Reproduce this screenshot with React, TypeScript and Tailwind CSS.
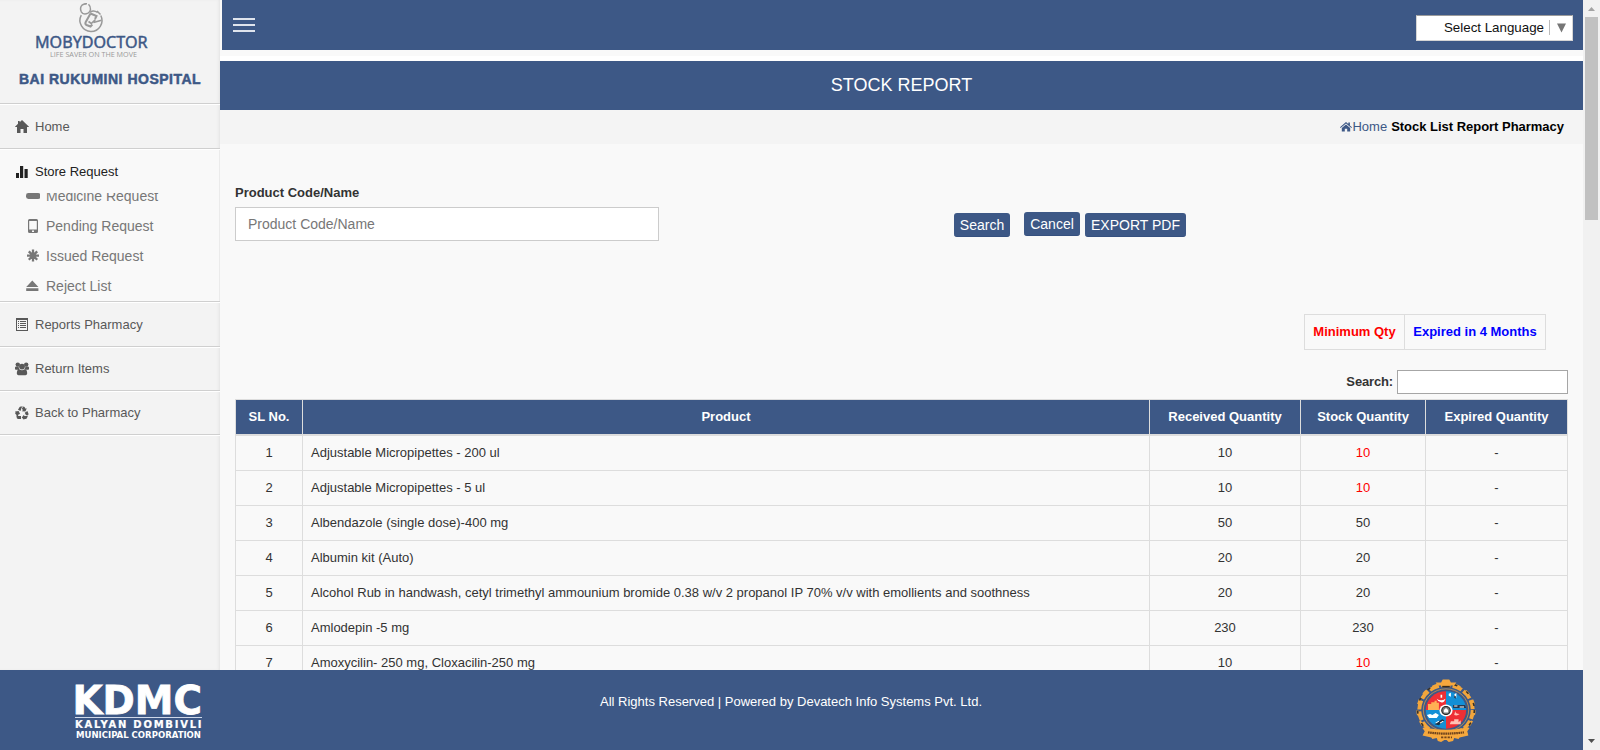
import React from "react";

const rows: [string, string, string, boolean][] = [
  ["Adjustable Micropipettes - 200 ul", "10", "10", true],
  ["Adjustable Micropipettes - 5 ul", "10", "10", true],
  ["Albendazole (single dose)-400 mg", "50", "50", false],
  ["Albumin kit (Auto)", "20", "20", false],
  [
    "Alcohol Rub in handwash, cetyl trimethyl ammounium bromide 0.38 w/v 2 propanol IP 70% v/v with emollients and soothness",
    "20",
    "20",
    false,
  ],
  ["Amlodepin -5 mg", "230", "230", false],
  ["Amoxycilin- 250 mg, Cloxacilin-250 mg", "10", "10", true],
];

function Icon({ children }: { children: React.ReactNode }) {
  return (
    <svg width="14" height="14" viewBox="0 0 14 14" fill="currentColor" className="shrink-0">
      {children}
    </svg>
  );
}

const HomeIcon = () => (
  <Icon>
    <path d="M7 0 14.200 7H12V13H8.500V9H5.500V13H2V7H-.2L3 3.800V1H4.700V2.300Z" />
  </Icon>
);
const StatsIcon = () => (
  <Icon>
    <path d="M1 8h3v5H1zM5 1h3.200v12H5zM9.500 4h3.200v9H9.500z" />
  </Icon>
);
const PillIcon = () => (
  <Icon>
    <rect x="0" y="4" width="14.500" height="6" rx="2.400" />
  </Icon>
);
const PhoneIcon = () => (
  <Icon>
    <path
      fillRule="evenodd"
      d="M3.500 0h7Q12 0 12 1.500v11Q12 14 10.500 14h-7Q2 14 2 12.500v-11Q2 0 3.500 0ZM3.200 1.900v8.600h7.600V1.900ZM6 11.600v1.300h2v-1.300Z"
    />
  </Icon>
);
const AsteriskIcon = () => (
  <Icon>
    <path d="M7 .6v12M1 6.600h12M2.800 2.400l8.400 8.400M11.200 2.400l-8.400 8.400" stroke="currentColor" strokeWidth="2.300" />
  </Icon>
);
const EjectIcon = () => (
  <Icon>
    <path d="M6.300 1.500 12.400 8H.2ZM.2 9.200h12.200v2.800H.2z" />
  </Icon>
);
const ListIcon = () => (
  <Icon>
    <path
      fillRule="evenodd"
      d="M1 0h12v13H1ZM2 2v10h10V2ZM3 3h1v1H3ZM5 3h6v1H5ZM3 5h1v1H3ZM5 5h6v1H5ZM3 7h1v1H3ZM5 7h6v1H5ZM3 9h1v1H3ZM5 9h6v1H5Z"
    />
  </Icon>
);
const UsersIcon = () => (
  <Icon>
    <circle cx="2.800" cy="2.600" r="2.200" />
    <circle cx="11.200" cy="2.600" r="2.200" />
    <circle cx="7" cy="4.600" r="2.900" />
    <path d="M0 7.300V5.500Q.2 4.300 1.500 4.500h2.200Q3.500 6 4.600 7.200L3.300 7.800H.8ZM14 7.300V5.500Q13.800 4.300 12.500 4.500h-2.200Q10.500 6 9.400 7.200L10.700 7.800h2.500ZM1.800 11.600Q1.800 7.300 4.500 7.300 7 9.200 9.500 7.300 12.200 7.300 12.200 11.600 12 13.200 10.500 13.200h-7Q2 13.200 1.800 11.600Z" />
  </Icon>
);
const RecycleIcon = () => (
  <Icon>
    <path d="M3 3.700 4.600 1Q5 .4 5.800 .4H8L6.600 1.700 5.500 5ZM8.400 .5Q9.300 .6 9.700 1.300L10.600 2.700 11.800 2.200 10.400 5.600 6.700 5.200 7.900 4.300 6.900 2.500ZM-.1 5.500 3.600 5 5.200 8.200 3.900 8 2.700 10.200.3 7.700Q0 7.100.6 6.200ZM1.200 9.200 2.800 10H6V13H3.300Q2.300 13 1.900 12.200ZM12.400 5 13.400 7.400Q13.700 8.200 13.200 9L11 9.300 9.700 6.800ZM6.700 11.600 9.200 8.600V10h2.400L13 9.500 11.900 12.200Q11.500 13 10.600 13H9.200v1Z" />
  </Icon>
);

function NavItem({ icon, label, tall }: { icon: React.ReactNode; label: string; tall?: boolean }) {
  return (
    <div
      className={`flex ${tall ? "h-[45px] pt-px" : "h-[44px] pb-px"} shrink-0 items-center border-t border-b border-t-white border-b-[#cfcfcf] pl-[15px] text-[13px] text-[#585858]`}
    >
      <span className="flex w-[20px]">{icon}</span>
      <span>{label}</span>
    </div>
  );
}

function SubItem({ icon, label }: { icon: React.ReactNode; label: string }) {
  return (
    <div className="flex h-[30px] shrink-0 items-center gap-[6px] pl-[26px] text-[14px] text-[#777]">
      {icon}
      <span>{label}</span>
    </div>
  );
}

function MobyLogo() {
  return (
    <svg width="116" height="60" viewBox="34 0 116 60" className="block">
      <g fill="none" stroke="#999" strokeWidth="1.500">
        <path d="M81.300 15.200A11 11 0 1 0 100.800 15.500" />
        <path d="M88 13.200Q83.500 15.500 81.300 11.800 79.500 7.500 82 5.200 83.500 4 86 3.800M88.500 4.300Q90.800 6.500 90.500 9.500 90.200 12 88 13.200" />
        <path d="M84.500 3.800h2.500M90 12.300Q93.500 9.800 97.500 12.500M97 11l3.500 3.500" />
        <path d="M90.500 13.500 96.500 16 95 19M90.500 13.500 85.500 22.500Q85 24.300 86.500 25L90.500 26.500 92.300 24.500" strokeWidth="2" />
        <path d="m88.500 21.500 2.800 2L95.500 19.500M93.500 22.500 101.500 20.300" strokeWidth="1.700" />
      </g>
      <text
        x="35"
        y="47.500"
        fill="#3d5886"
        stroke="#3d5886"
        strokeWidth=".45"
        fontFamily="Noto Sans, sans-serif"
        fontSize="16"
        textLength="112.500"
        lengthAdjust="spacingAndGlyphs"
      >
        MOBYDOCTOR
      </text>
      <text x="50" y="57" fill="#999" fontFamily="Open Sans, sans-serif" fontSize="7.800" textLength="87" lengthAdjust="spacingAndGlyphs">
        LIFE SAVER ON THE MOVE
      </text>
    </svg>
  );
}

function KdmcLogo() {
  return (
    <svg
      width="132"
      height="80"
      viewBox="72 670 132 80"
      className="block"
      fill="#fff"
      fontFamily="DejaVu Sans, sans-serif"
      fontWeight="bold"
    >
      <text x="72.500" y="713.500" fontSize="39.500" stroke="#fff" strokeWidth=".8" textLength="129.500" lengthAdjust="spacingAndGlyphs">
        KDMC
      </text>
      <path d="M75 717h127v1H75z" fill="#cfd9ea" />
      <text x="75" y="728" fontSize="10" stroke="#fff" strokeWidth=".2" textLength="126.500" lengthAdjust="spacing">
        KALYAN DOMBIVLI
      </text>
      <text x="76" y="737.700" fontSize="8.500" textLength="125" lengthAdjust="spacingAndGlyphs">
        MUNICIPAL CORPORATION
      </text>
    </svg>
  );
}

function Emblem() {
  return (
    <svg width="60" height="64" viewBox="2 0.5 55 63" preserveAspectRatio="none" className="block">
      <circle cx="29.500" cy="31" r="24.500" fill="none" stroke="#f2a63c" strokeWidth="3.600" strokeDasharray="9 2" />
      <circle cx="29.500" cy="31" r="26.200" fill="none" stroke="#f2a63c" strokeWidth="1.800" strokeDasharray="5 6" />
      <circle cx="29.500" cy="31" r="26" fill="none" stroke="#3a3226" strokeWidth="1.500" strokeDasharray="3 10" />
      <circle cx="29.500" cy="31" r="20.800" fill="#3d5886" stroke="#c9974e" strokeWidth=".8" />
      <path d="M29.500 31V12.500A18.500 18.500 0 0 0 11 31Z" fill="#ee2f35" />
      <path d="M29.500 31V12.500A18.500 18.500 0 0 1 48 31Z" fill="#138fd6" />
      <path d="M29.500 31H11A18.500 18.500 0 0 0 29.500 49.500Z" fill="#138fd6" />
      <path d="M29.500 31H48A18.500 18.500 0 0 1 29.500 49.500Z" fill="#ee2f35" />
      <path d="M13 25h3v-1.500h3V22h2v2h2v7H13z" fill="#ffb054" />
      <path d="M21 20q4 3 8 0-1 4-4 3.500T21 20ZM24.500 16h1.500v3h-1.500Z" fill="#fff" />
      <path d="M32 15l2-1v4l-2-1ZM37 16l2-2v5l-2-1Z" fill="#fff" />
      <path d="M37 16.500l1.500 1V20L37 19ZM36 26h11l1 3H36Z" fill="#26394f" />
      <path d="M37 27h3M42 28h4" stroke="#fff" />
      <path d="M12 36l3-1 2 1 3-2 3 2-2 3h-7Z" fill="#fff" />
      <path d="m19 45 7-5 2 1-5 5Z" fill="#1c2f42" />
      <path d="m20 44 3-2M24 44l3-2" stroke="#fff" />
      <path d="M38 32q0 3 4 3-2 2-5 1ZM34 42h3v-2h4v3l2-2v4H33Z" fill="#ffc2b5" />
      <circle cx="29.500" cy="31.500" r="6" fill="#fff" />
      <circle cx="29.500" cy="31.500" r="3.900" fill="#777" stroke="#222" strokeWidth="1" />
      <path d="M27.500 33.500v-2.500l2-2 2 2v2.500Z" fill="#fff" />
      <path d="M20 4h5l1.500-3h6L34 4h5l-2 3H22Z" fill="#f6a83d" />
      <path d="M26 8h7" stroke="#3a2a18" strokeWidth="1.500" />
      <path
        d="M8 49q2-2 6 0 15 3 31 0 4-2 6 0l-2 3 1 4-4 1-4 1-1 1.500-4-1-1 3-4 1-2-2h-2l-3 2-3-1-1-3-4 1-1-1.500-4-1-4-1 2-4Z"
        fill="#f6a83d"
      />
      <path d="M13 53q16 2.500 33 0" fill="none" stroke="#6f431c" strokeWidth="2.200" strokeDasharray="1.500 .5" />
      <path d="M25 58h10" stroke="#6f431c" strokeWidth="1.800" strokeDasharray="2 1" />
    </svg>
  );
}

function Sidebar() {
  return (
    <aside className="flex w-[220px] shrink-0 flex-col bg-[#f3f3f3] shadow-[inset_-2px_0_3px_-1px_#e2e2e2]">
      <div className="flex h-[104px] shrink-0 flex-col border-b border-[#cfcfcf]">
        <div className="pl-[34px]">
          <MobyLogo />
        </div>
        <div className="mt-[9px] pl-[19px] text-[14px] leading-[20px] font-bold tracking-[0.5px] text-[#3d5886] [-webkit-text-stroke:0.5px_#3d5886]">
          BAI RUKUMINI HOSPITAL
        </div>
      </div>
      <NavItem icon={<HomeIcon />} label="Home" tall />
      <div className="flex h-[153px] shrink-0 flex-col border-t border-b border-t-white border-b-[#cfcfcf] bg-[#f9f9f9]">
        <div className="flex h-[43px] shrink-0 items-center gap-[6px] border-r border-[#ebebeb] pt-px pl-[15px] text-[13px] text-[#222]">
          <StatsIcon />
          <span>Store Request</span>
        </div>
        <div className="flex min-h-0 grow flex-col justify-end overflow-hidden border-r border-[#ebebeb]">
          <SubItem icon={<PillIcon />} label="Medicine Request" />
          <SubItem icon={<PhoneIcon />} label="Pending Request" />
          <SubItem icon={<AsteriskIcon />} label="Issued Request" />
          <SubItem icon={<EjectIcon />} label="Reject List" />
        </div>
      </div>
      <NavItem icon={<ListIcon />} label="Reports Pharmacy" tall />
      <NavItem icon={<UsersIcon />} label="Return Items" />
      <NavItem icon={<RecycleIcon />} label="Back to Pharmacy" />
      <div className="h-px shrink-0 bg-white" />
    </aside>
  );
}

function StockTable() {
  const th = "border border-b-2 border-[#ddd] p-0 pb-px text-center font-bold";
  const td = "border border-[#ddd] p-0 text-center";
  return (
    <table className="w-[1333px] table-fixed border-collapse text-[13px] text-[#333]">
      <colgroup>
        <col className="w-[67px]" />
        <col className="w-[847px]" />
        <col className="w-[151px]" />
        <col className="w-[125px]" />
        <col className="w-[142px]" />
      </colgroup>
      <thead>
        <tr className="h-[35px] bg-[#3d5886] text-white">
          <th className={th}>SL No.</th>
          <th className={th}>Product</th>
          <th className={th}>Received Quantity</th>
          <th className={th}>Stock Quantity</th>
          <th className={th}>Expired Quantity</th>
        </tr>
      </thead>
      <tbody>
        {rows.map(([name, received, stock, low], i) => (
          <tr key={name} className={i === 0 ? "h-[36px]" : "h-[35px]"}>
            <td className={td}>{i + 1}</td>
            <td className="border border-[#ddd] p-0 pl-[8px] text-left">{name}</td>
            <td className={td}>{received}</td>
            <td className={low ? "border border-[#ddd] p-0 text-center text-[#f00]" : td}>{stock}</td>
            <td className={td}>-</td>
          </tr>
        ))}
      </tbody>
    </table>
  );
}

function Main() {
  const btn =
    "flex h-[24px] items-center justify-center rounded-[3px] border-b border-[#35507f] bg-[#3d5886] pt-[2px] text-[14px] text-white";
  return (
    <main className="flex min-w-0 grow flex-col overflow-hidden bg-[#f9f9f9]">
      <header className="ml-[2px] flex h-[50px] shrink-0 items-start justify-between bg-[#3d5886] pt-[15px] pr-[10px] pl-[11px]">
        <div className="mt-[3px] flex w-[22px] flex-col gap-[4px]">
          <div className="h-[2px] bg-[#dfe4ed]" />
          <div className="h-[2px] bg-[#dfe4ed]" />
          <div className="h-[2px] bg-[#dfe4ed]" />
        </div>
        <div className="flex h-[26px] w-[157px] items-center justify-end border border-t-[#9b9b9b] border-r-[#d5d5d5] border-b-[#d5d5d5] border-l-[#d5d5d5] bg-white pr-[6px] text-[13.333px] text-[#111]">
          <span className="mt-[-1px] whitespace-nowrap">Select Language</span>
          <span className="mt-[-1px] mr-[7px] ml-[5px] h-[15px] w-px bg-[#bbb]" />
          <svg width="9" height="10" viewBox="0 0 9 10">
            <path d="M0 .5h9L4.500 9.500Z" fill="#767676" />
          </svg>
        </div>
      </header>
      <div className="mt-[6px] h-[5px] shrink-0 bg-white" />
      <h1 className="flex h-[49px] shrink-0 items-center justify-center bg-[#3d5886] text-[18px] text-white">STOCK REPORT</h1>
      <div className="flex h-[34px] shrink-0 items-center justify-end bg-[#f4f4f4] pr-[19px] text-[13px] text-[#3d5886]">
        <svg width="12" height="10" viewBox="0 0 12 10" fill="#3d5886">
          <path d="M6 0 8.300 2V.6H9.900V3.400L12 5.200 11.400 5.900 6 1.500.6 5.900 0 5.200ZM6 2.400 10.200 5.900V9.600H7.200V6.700H4.800V9.600H1.800V5.900Z" />
        </svg>
        <span>Home</span>
        <span className="ml-[4px] font-bold tracking-[-0.02px] text-black">Stock List Report Pharmacy</span>
      </div>
      <div className="flex min-h-0 grow flex-col overflow-hidden pl-[15px]">
        <div className="flex h-[170px] shrink-0">
          <div className="w-[719px] pt-[39px]">
            <div className="text-[13px] leading-[20px] font-bold text-[#333]">Product Code/Name</div>
            <div className="mt-[4px] flex h-[34px] w-[424px] items-center border border-[#ccc] bg-white pl-[12px] text-[14px] text-[#777]">
              Product Code/Name
            </div>
          </div>
          <div className="flex items-start pt-[68px]">
            <div className="mt-px mr-[14px] w-[56px]">
              <div className={btn}>Search</div>
            </div>
            <div className="mr-[5px] w-[56px]">
              <div className={btn}>Cancel</div>
            </div>
            <div className="mt-px w-[101px]">
              <div className={btn}>EXPORT PDF</div>
            </div>
          </div>
        </div>
        <div className="mr-[37px] flex h-[36px] shrink-0 self-end border border-[#ddd] text-[13px] font-bold">
          <div className="flex w-[100px] items-center justify-center border-r border-[#ddd] text-[#f00]">Minimum Qty</div>
          <div className="flex w-[140px] items-center justify-center text-[#00f]">Expired in 4 Months</div>
        </div>
        <div className="mt-[20px] mr-[15px] flex h-[24px] shrink-0 items-center justify-end text-[13px] font-bold text-[#333]">
          <span className="tracking-[-0.15px]">Search:</span>
          <div className="ml-[4px] h-[24px] w-[171px] border border-[#a6a6a6] bg-white" />
        </div>
        <div className="mt-[5px] shrink-0">
          <StockTable />
        </div>
      </div>
    </main>
  );
}

export default function App() {
  return (
    <div className="flex h-[750px] w-[1600px] overflow-hidden bg-[#f9f9f9] font-['Liberation_Sans',Arial,sans-serif]">
      <div className="flex w-[1583px] shrink-0 flex-col">
        <div className="flex h-[670px] shrink-0">
          <Sidebar />
          <Main />
        </div>
        <footer className="flex h-[80px] shrink-0 bg-[#3d5886] text-white">
          <div className="w-[600px] pl-[72px]">
            <KdmcLogo />
          </div>
          <div className="w-[816px] pt-[22px] text-[13px] leading-[20px]">
            All Rights Reserved | Powered by Devatech Info Systems Pvt. Ltd.
          </div>
          <div className="pt-[9px]">
            <Emblem />
          </div>
        </footer>
      </div>
      <div className="flex w-[17px] shrink-0 flex-col items-center bg-[#f1f1f1]">
        <svg width="17" height="17" viewBox="0 0 17 17">
          <path d="M5 11h7L8.500 7Z" fill="#a3a3a3" />
        </svg>
        <div className="h-[203px] w-[13px] bg-[#c1c1c1]" />
        <svg width="17" height="17" viewBox="0 0 17 17" className="mt-auto">
          <path d="M5 6h7L8.500 10Z" fill="#505050" />
        </svg>
      </div>
    </div>
  );
}
